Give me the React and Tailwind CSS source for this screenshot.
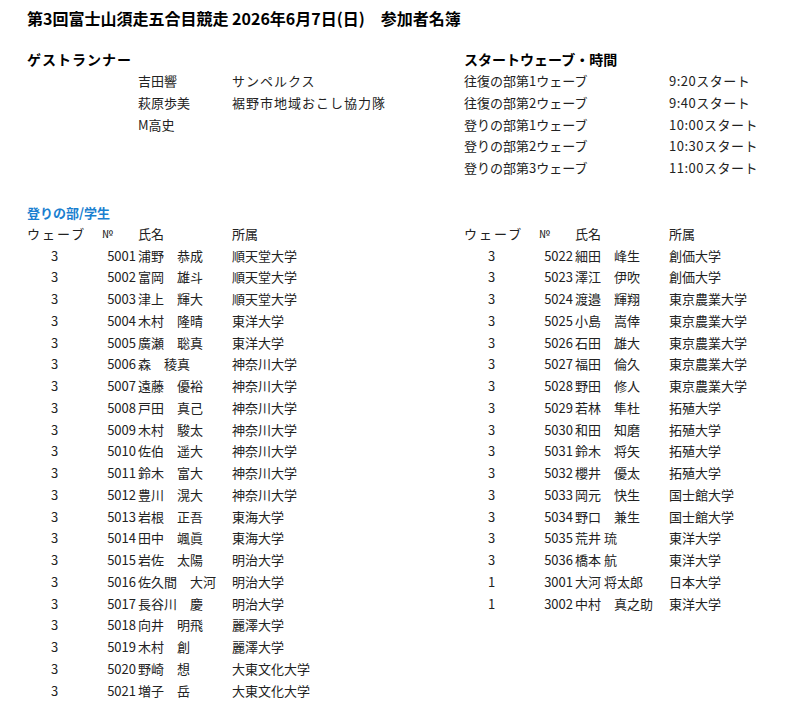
const left = [
  ['3','5001','浦野　恭成','順天堂大学'],['3','5002','富岡　雄斗','順天堂大学'],['3','5003','津上　輝大','順天堂大学'],
  ['3','5004','木村　隆晴','東洋大学'],['3','5005','廣瀬　聡真','東洋大学'],['3','5006','森　稜真','神奈川大学'],
  ['3','5007','遠藤　優裕','神奈川大学'],['3','5008','戸田　真己','神奈川大学'],['3','5009','木村　駿太','神奈川大学'],
  ['3','5010','佐伯　遥大','神奈川大学'],['3','5011','鈴木　富大','神奈川大学'],['3','5012','豊川　滉大','神奈川大学'],
  ['3','5013','岩根　正吾','東海大学'],['3','5014','田中　颯眞','東海大学'],['3','5015','岩佐　太陽','明治大学'],
  ['3','5016','佐久間　大河','明治大学'],['3','5017','長谷川　慶','明治大学'],['3','5018','向井　明飛','麗澤大学'],
  ['3','5019','木村　創','麗澤大学'],['3','5020','野崎　想','大東文化大学'],['3','5021','増子　岳','大東文化大学'],
];
const right = [
  ['3','5022','細田　峰生','創価大学'],['3','5023','澤江　伊吹','創価大学'],['3','5024','渡邉　輝翔','東京農業大学'],
  ['3','5025','小島　嵩倖','東京農業大学'],['3','5026','石田　雄大','東京農業大学'],['3','5027','福田　倫久','東京農業大学'],
  ['3','5028','野田　修人','東京農業大学'],['3','5029','若林　隼杜','拓殖大学'],['3','5030','和田　知磨','拓殖大学'],
  ['3','5031','鈴木　将矢','拓殖大学'],['3','5032','櫻井　優太','拓殖大学'],['3','5033','岡元　快生','国士館大学'],
  ['3','5034','野口　兼生','国士館大学'],['3','5035','荒井 琉','東洋大学'],['3','5036','橋本 航','東洋大学'],
  ['1','3001','大河 将太郎','日本大学'],['1','3002','中村　真之助','東洋大学'],
];
const waves = [
  ['往復の部第1ウェーブ','9:20スタート'],['往復の部第2ウェーブ','9:40スタート'],['登りの部第1ウェーブ','10:00スタート'],
  ['登りの部第2ウェーブ','10:30スタート'],['登りの部第3ウェーブ','11:00スタート'],
];

function Table({ rows }) {
  return (
    <div className="w-[437px] shrink-0">
      <div className="flex h-[21.75px] items-center">
        <span className="w-[75px] tracking-[2px]">ウェーブ</span>
        <span className="w-[36px] text-[11px]">№</span>
        <span className="w-[94px]">氏名</span>
        <span>所属</span>
      </div>
      {rows.map((r) => (
        <div key={r[1]} className="flex h-[21.75px] items-center">
          <span className="w-[55px] text-center">{r[0]}</span>
          <span className="w-[56px] text-right pr-[2px]">{r[1]}</span>
          <span className="w-[94px] whitespace-pre">{r[2]}</span>
          <span>{r[3]}</span>
        </div>
      ))}
    </div>
  );
}

export default function App() {
  return (
    <div className="w-[796px] h-[711px] bg-white text-[#222] text-[13px] px-[27px] pt-[6px] overflow-hidden" style={{ fontFamily: '"Noto Sans CJK JP", "Liberation Sans", sans-serif' }}>
      <h1 className="text-[16px] font-bold text-black h-[24px] leading-[24px]">第3回富士山須走五合目競走 2026年6月7日(日)　参加者名簿</h1>
      <div className="flex mt-[18px]">
        <div className="w-[437px] shrink-0">
          <div className="font-bold text-[14px] text-black h-[22px] leading-[22px] tracking-[1px]">ゲストランナー</div>
          {[['吉田響','サンペルクス'],['萩原歩美','裾野市地域おこし協力隊'],['M高史','']].map((g) => (
            <div key={g[0]} className="flex h-[21.75px] items-center pl-[111px]">
              <span className="w-[94px]">{g[0]}</span>
              <span className="tracking-[1px]">{g[1]}</span>
            </div>
          ))}
        </div>
        <div>
          <div className="font-bold text-[14px] text-black h-[22px] leading-[22px]">スタートウェーブ・時間</div>
          {waves.map((w) => (
            <div key={w[0]} className="flex h-[21.75px] items-center">
              <span className="w-[205px]">{w[0]}</span>
              <span className="tracking-[0.5px]">{w[1]}</span>
            </div>
          ))}
        </div>
      </div>
      <div className="mt-[23px] font-bold text-[13px] text-[#1a7fd0] h-[21px] leading-[21px]">登りの部/学生</div>
      <div className="flex">
        <Table rows={left} />
        <Table rows={right} />
      </div>
    </div>
  );
}
